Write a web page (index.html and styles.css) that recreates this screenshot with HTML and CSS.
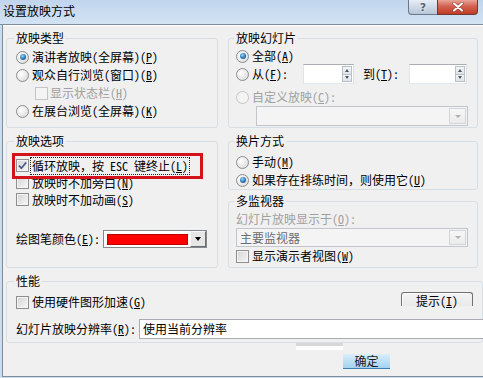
FILE: index.html
```html
<!DOCTYPE html>
<html lang="zh-CN">
<head>
<meta charset="utf-8">
<title>设置放映方式</title>
<link rel="stylesheet" href="styles.css">
</head>
<body>
<div class="win">
  <div class="titlebar">
    <span class="title">设置放映方式</span>
    <div class="caps">
      <span class="cap-help">?</span>
      <span class="cap-close"><svg width="12" height="10" viewBox="0 0 12 10"><path d="M2 1.5L10 8.5M10 1.5L2 8.5" stroke="#6a2d24" stroke-width="3.4" stroke-linecap="round" opacity=".55"/><path d="M2 1.5L10 8.5M10 1.5L2 8.5" stroke="#fff" stroke-width="2" stroke-linecap="round"/></svg></span>
    </div>
  </div>
  <div class="body">
    <div class="grid">
      <fieldset class="grp g1">
        <legend>放映类型</legend>
        <div class="row"><span class="radio on"></span><span>演讲者放映(全屏幕)(<u>P</u>)</span></div>
        <div class="row"><span class="radio"></span><span>观众自行浏览(窗口)(<u>B</u>)</span></div>
        <div class="row sub dis"><span class="chk"></span><span>显示状态栏(<u>H</u>)</span></div>
        <div class="row"><span class="radio"></span><span>在展台浏览(全屏幕)(<u>K</u>)</span></div>
      </fieldset>
      <fieldset class="grp gr g2">
        <legend>放映幻灯片</legend>
        <div class="row r16"><span class="radio on"></span><span>全部(<u>A</u>)</span></div>
        <div class="row r20">
          <span class="radio"></span><span>从(<u>F</u>):</span>
          <span class="spin s1"><span class="spin-btns"><i class="up"></i><i class="dn"></i></span></span>
          <span class="to">到(<u>T</u>):</span>
          <span class="spin s2"><span class="spin-btns"><i class="up"></i><i class="dn"></i></span></span>
        </div>
        <div class="row r14 dis custom-row"><span class="radio"></span><span>自定义放映(<u>C</u>):</span></div>
        <div class="combo custom"><span class="combo-text"></span><span class="combo-btn"><i></i></span></div>
      </fieldset>
      <fieldset class="grp g3">
        <legend>放映选项</legend>
        <div class="row r17 marked">
          <span class="chk on"><svg width="11" height="11" viewBox="0 0 11 11"><path d="M2 5.6L4.4 8.2L9.2 2.4" fill="none" stroke="#4a5d8c" stroke-width="1.7"/></svg></span>
          <span class="focus">循环放映，按 ESC 键终止(<u>L</u>)</span>
          <span class="mark"></span>
        </div>
        <div class="row r17"><span class="chk"></span><span>放映时不加旁白(<u>N</u>)</span></div>
        <div class="row r17"><span class="chk"></span><span>放映时不加动画(<u>S</u>)</span></div>
        <div class="row r20 pen">
          <span>绘图笔颜色(<u>E</u>):</span>
          <span class="picker"><span class="swatch"></span><span class="pbtn"><i></i></span></span>
        </div>
      </fieldset>
      <div class="rcol">
        <fieldset class="grp gr g4">
          <legend>换片方式</legend>
          <div class="row"><span class="radio"></span><span>手动(<u>M</u>)</span></div>
          <div class="row"><span class="radio on"></span><span>如果存在排练时间，则使用它(<u>U</u>)</span></div>
        </fieldset>
        <fieldset class="grp gr g5">
          <legend>多监视器</legend>
          <div class="row r14 dis mon-label"><span>幻灯片放映显示于(<u>O</u>):</span></div>
          <div class="combo monitor"><span class="combo-text">主要监视器</span><span class="combo-btn"><i></i></span></div>
          <div class="row"><span class="chk"></span><span>显示演示者视图(<u>W</u>)</span></div>
        </fieldset>
      </div>
    </div>
    <fieldset class="grp perf">
      <legend>性能</legend>
      <div class="row r20">
        <span class="chk"></span><span>使用硬件图形加速(<u>G</u>)</span>
        <span class="hint">提示(<u>I</u>)</span>
      </div>
      <div class="row r20 res">
        <span>幻灯片放映分辨率(<u>R</u>):</span>
        <span class="res-input">使用当前分辨率</span>
      </div>
    </fieldset>
    <div class="foot">
      <span class="ghost"></span>
      <span class="okbtn">确定</span>
    </div>
  </div>
</div>
</body>
</html>
```

FILE: styles.css
```css
* { box-sizing: border-box; }
html, body { margin: 0; padding: 0; }
body {
  width: 483px;
  height: 378px;
  overflow: hidden;
  font-family: "Noto Sans Mono CJK SC", "Noto Sans CJK SC", sans-serif;
  font-size: 12px;
  line-height: 14px;
  color: #000;
  background: #cbdcef;
}
u { text-decoration: underline; text-underline-offset: 1px; }

.win {
  width: 483px;
  height: 378px;
  display: flex;
  flex-direction: column;
  background: #cbdcef;
}

.titlebar {
  height: 25px;
  flex: none;
  display: flex;
  align-items: flex-start;
  padding-left: 3px;
  background: linear-gradient(#c0d5ec, #d3e3f3);
  border-bottom: 1px solid #7f8c99;
}
.title { margin-top: 4px; line-height: 14px; }
.caps { margin-left: auto; margin-right: 5px; display: flex; }
.cap-help {
  width: 29px;
  height: 15px;
  border: 1px solid #6b7887;
  border-top: none;
  border-right: none;
  border-radius: 0 0 0 4px;
  background: linear-gradient(#e6edf5, #b7c6d8);
  display: flex;
  align-items: center;
  justify-content: center;
  color: #56626f;
  font-family: "DejaVu Sans", sans-serif;
  font-weight: bold;
  font-size: 11px;
  line-height: 11px;
  text-shadow: 0 0 2px #fff;
}
.cap-close {
  width: 41px;
  height: 15px;
  border: 1px solid #6d3b33;
  border-top: none;
  border-radius: 0 0 4px 0;
  background: linear-gradient(#e8a596, #d2614f 45%, #c13c27);
  display: flex;
  align-items: center;
  justify-content: center;
}

.body {
  flex: 1;
  margin: 0 0 1px 2px;
  border-left: 1px solid #7f8c99;
  border-bottom: 1px solid #7f8c99;
  background: #f0f0f0;
  box-shadow: inset 0 1px 0 #fff;
  padding: 6px 0 0 3px;
}

.grid {
  display: grid;
  grid-template-columns: 212px 250px;
  column-gap: 10px;
  row-gap: 6px;
}

.grp {
  margin: 0;
  min-width: 0;
  border: 1px solid #d5dfe5;
  border-radius: 3px;
  padding: 0 0 0 9px;
}
.grp legend { padding: 0 2px; margin-left: -2px; line-height: 14px; }
.gr { padding-left: 7px; }

.row {
  display: flex;
  align-items: center;
  height: 18px;
  white-space: nowrap;
}
.r14 { height: 14px; }
.r16 { height: 16px; }
.r17 { height: 17px; }
.r20 { height: 20px; }
.dis { color: #a0a0a0; }

.radio, .chk {
  flex: none;
  width: 13px;
  height: 13px;
  margin-right: 3px;
  display: grid;
  place-items: center;
}
.radio {
  border-radius: 50%;
  border: 1px solid #8b8d8f;
  background: radial-gradient(circle at 35% 35%, #ffffff, #e6e6e6 60%, #d0d0d0);
}
.radio.on::after {
  content: "";
  width: 6px;
  height: 6px;
  border-radius: 50%;
  background: radial-gradient(circle at 40% 35%, #9ad6f7, #2a76b4 55%, #12406f);
}
.chk {
  border: 1px solid #8e8f8f;
  background: linear-gradient(135deg, #d3d3d3, #f8f8f8);
  box-shadow: inset 0 0 0 1px #f4f4f4;
}
.dis .radio, .dis .chk {
  border-color: #c5c5c5;
  background: #f4f4f4;
  box-shadow: none;
}

.g1 { padding-top: 3px; padding-bottom: 7px; }
.sub { margin-left: 19px; }
.sub .chk { margin-right: 2px; }

.g2 { padding-top: 3px; padding-bottom: 1px; }
.spin {
  flex: none;
  height: 20px;
  border: 1px solid;
  border-color: #abadb3 #dbdfe6 #e3e9ef #e2e3ea;
  background: #fff;
  display: flex;
  justify-content: flex-end;
  padding: 1px;
}
.s1 { width: 51px; margin-left: 15px; }
.s2 { width: 58px; margin-left: 10px; }
.to { margin-left: 9px; }
.spin-btns { width: 10px; display: flex; flex-direction: column; }
.spin-btns i {
  flex: 1;
  display: grid;
  place-items: center;
  background: linear-gradient(#f4f6f8, #dde3e9);
  border: 1px solid #b9c0c8;
}
.spin-btns i + i { border-top: none; }
.spin-btns i::after {
  content: "";
  border-left: 2.5px solid transparent;
  border-right: 2.5px solid transparent;
}
.spin-btns .up::after { border-bottom: 3px solid #50555c; }
.spin-btns .dn::after { border-top: 3px solid #50555c; }

.custom-row { margin-top: 6px; }
.combo {
  height: 20px;
  border: 1px solid #c2c5c9;
  background: #f4f4f4;
  display: flex;
  align-items: stretch;
  padding: 1px;
  color: #6d6d6d;
}
.custom { margin: 2px 0 0 20px; width: 212px; }
.combo-text { flex: 1; padding-left: 3px; line-height: 16px; }
.combo-btn {
  width: 17px;
  display: grid;
  place-items: center;
  border: 1px solid #d3d6d9;
  background: linear-gradient(#f7f7f7, #ebebeb);
}
.combo-btn i {
  border-left: 3.5px solid transparent;
  border-right: 3.5px solid transparent;
  border-top: 3.5px solid #b0b0b0;
}

.g3 { padding-top: 9px; }
.marked { position: relative; }
.focus { outline: 1px dotted #222; padding: 1px 1px; margin-left: -1px; }
.mark {
  position: absolute;
  left: -4px;
  top: -4px;
  width: 191px;
  height: 26px;
  border: 3px solid #d3121c;
  pointer-events: none;
}
.pen { margin-top: 21px; }
.picker {
  margin-left: 3px;
  width: 104px;
  height: 18px;
  border: 1px solid #828790;
  background: #fff;
  display: flex;
  align-items: center;
  padding: 0 0 0 3px;
}
.swatch { width: 81px; height: 11px; background: #ff0000; border: 1px solid #c00000; }
.pbtn {
  margin-left: auto;
  width: 16px;
  height: 16px;
  display: grid;
  place-items: center;
  border: 1px solid;
  border-color: #f8f8f8 #6e6e6e #6e6e6e #f8f8f8;
  background: #e6e6e6;
}
.pbtn i {
  border-left: 3.5px solid transparent;
  border-right: 3.5px solid transparent;
  border-top: 4px solid #000;
}

.rcol { display: flex; flex-direction: column; }
.g4 { padding-top: 5px; }
.g5 { margin-top: 4px; flex: 1; padding-bottom: 2px; }
.mon-label { margin-top: 4px; }
.monitor { margin-top: 2px; width: 232px; height: 19px; }
.monitor .combo-text { padding-left: 2px; line-height: 15px; }

.perf { margin-top: 6px; padding: 4px 0 3px 9px; }
.hint {
  align-self: flex-start;
  margin-left: auto;
  margin-right: 9px;
  width: 72px;
  height: 14px;
  border: 1px solid #707070;
  border-bottom: none;
  border-radius: 3px 3px 0 0;
  background: linear-gradient(#f4f4f4, #e9e9e9);
  box-shadow: inset 1px 1px 0 #fcfcfc;
  text-align: center;
  line-height: 13px;
  padding-top: 1px;
}
.res { margin-top: 7px; }
.res-input {
  flex: none;
  margin-left: 3px;
  width: 344px;
  height: 20px;
  border: 1px solid #a9abb0;
  border-right: none;
  background: #fff;
  padding-left: 3px;
  line-height: 18px;
}

.foot { display: flex; align-items: flex-start; padding-left: 290px; }
.ghost {
  width: 47px;
  height: 7px;
  border-top: 3px solid #d8d8d8;
  background: #fff;
}
.okbtn {
  margin-top: 11px;
  width: 47px;
  height: 15px;
  background: linear-gradient(#d9eefb, #a4d3f0);
  border-bottom: 1px solid #3c7fb1;
  text-align: center;
  line-height: 14px;
  color: #1b1b1b;
}
```
